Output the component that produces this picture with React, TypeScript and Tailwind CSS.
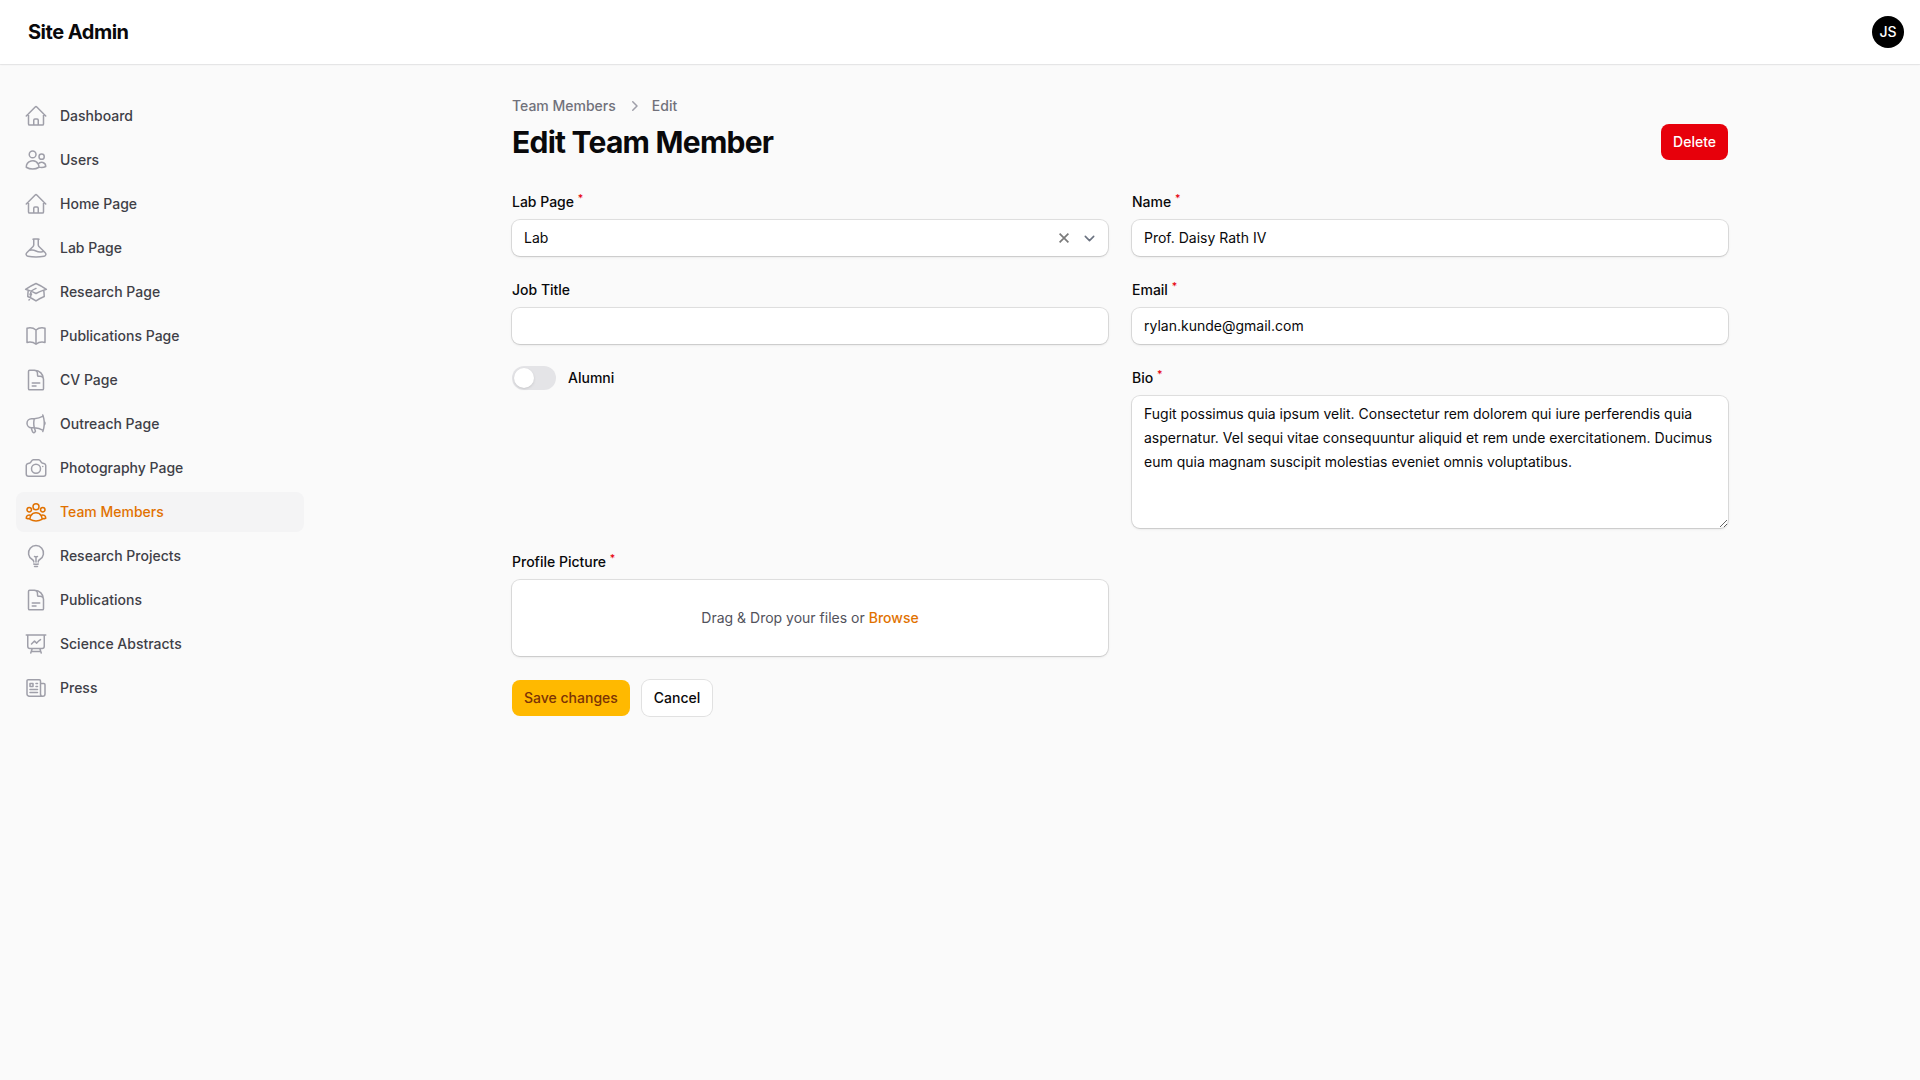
import type { ReactNode } from 'react';
import type { IconType } from 'react-icons';
import {
  HiMiniChevronRight,
  HiOutlineAcademicCap,
  HiOutlineBeaker,
  HiOutlineBookOpen,
  HiOutlineCamera,
  HiOutlineDocumentText,
  HiOutlineHome,
  HiOutlineLightBulb,
  HiOutlineMegaphone,
  HiOutlineNewspaper,
  HiOutlinePresentationChartLine,
  HiOutlineUserGroup,
  HiOutlineUsers,
} from 'react-icons/hi2';

const navItems: { label: string; icon: IconType; active?: boolean }[] = [
  { label: 'Dashboard', icon: HiOutlineHome },
  { label: 'Users', icon: HiOutlineUsers },
  { label: 'Home Page', icon: HiOutlineHome },
  { label: 'Lab Page', icon: HiOutlineBeaker },
  { label: 'Research Page', icon: HiOutlineAcademicCap },
  { label: 'Publications Page', icon: HiOutlineBookOpen },
  { label: 'CV Page', icon: HiOutlineDocumentText },
  { label: 'Outreach Page', icon: HiOutlineMegaphone },
  { label: 'Photography Page', icon: HiOutlineCamera },
  { label: 'Team Members', icon: HiOutlineUserGroup, active: true },
  { label: 'Research Projects', icon: HiOutlineLightBulb },
  { label: 'Publications', icon: HiOutlineDocumentText },
  { label: 'Science Abstracts', icon: HiOutlinePresentationChartLine },
  { label: 'Press', icon: HiOutlineNewspaper },
];

function Topbar() {
  return (
    <header className="flex h-16 items-center justify-between bg-white pr-4 pl-7 shadow-xs ring-1 ring-zinc-950/5">
      <div className="text-xl leading-5 font-bold tracking-tight">Site Admin</div>
      <div className="flex size-8 items-center justify-center rounded-full bg-black text-sm font-medium text-white">
        JS
      </div>
    </header>
  );
}

function Sidebar() {
  return (
    <nav className="flex w-80 shrink-0 flex-col gap-1 px-4 py-8">
      {navItems.map(({ label, icon: Icon, active }) => (
        <a
          key={label}
          className={
            active
              ? 'flex h-10 items-center gap-3 rounded-lg bg-zinc-100 px-2 text-amber-600'
              : 'flex h-10 items-center gap-3 rounded-lg px-2 text-zinc-700'
          }
        >
          <Icon className={active ? 'size-6' : 'size-6 text-zinc-400'} />
          <span className="text-sm font-medium">{label}</span>
        </a>
      ))}
    </nav>
  );
}

function Field({ label, required, children }: { label: string; required?: boolean; children: ReactNode }) {
  return (
    <div className="flex flex-col gap-2">
      <div className="h-5 text-sm leading-5 font-medium">
        {label}
        {required && (
          <>
            {' '}
            <sup className="font-medium text-red-600">*</sup>
          </>
        )}
      </div>
      <div className="rounded-lg bg-white text-sm shadow-sm ring-1 ring-zinc-950/10">{children}</div>
    </div>
  );
}

function TextInput({ value }: { value: string }) {
  return <div className="flex h-9 items-center px-3">{value}</div>;
}

export default function App() {
  return (
    <div className="flex min-h-screen flex-col bg-zinc-50 font-['Inter',sans-serif] text-zinc-950 antialiased">
      <Topbar />
      <div className="flex flex-1">
        <Sidebar />
        <main className="mx-auto flex w-full max-w-7xl flex-col gap-8 px-8 py-8">
          <div>
            <div className="mb-2 flex h-5 items-center gap-2 text-sm font-medium text-zinc-500">
              <span>Team Members</span>
              <HiMiniChevronRight className="size-5 text-zinc-400" />
              <span>Edit</span>
            </div>
            <div className="flex items-center justify-between">
              <h1 className="text-3xl font-bold tracking-tight">Edit Team Member</h1>
              <button className="h-9 rounded-lg bg-red-600 px-3 text-sm font-medium text-white">Delete</button>
            </div>
          </div>

          <form className="flex flex-col gap-6">
            <div className="grid grid-cols-2 gap-6">
              <Field label="Lab Page" required>
                <div className="flex h-9 items-center pr-2 pl-3">
                  <span className="flex-1">Lab</span>
                  <svg className="mr-2.5 size-[10px]" viewBox="0 0 10 10" fill="none" stroke="#7a7a7a" strokeWidth="1.7">
                    <path d="M.6.6l8.8 8.8M9.4.6L.6 9.4" />
                  </svg>
                  <svg
                    className="size-[21px]"
                    viewBox="0 0 20 20"
                    fill="none"
                    stroke="#6b7280"
                    strokeWidth="1.5"
                    strokeLinecap="round"
                    strokeLinejoin="round"
                  >
                    <path d="m6 8 4 4 4-4" />
                  </svg>
                </div>
              </Field>
              <Field label="Name" required>
                <TextInput value="Prof. Daisy Rath IV" />
              </Field>
              <Field label="Job Title">
                <TextInput value="" />
              </Field>
              <Field label="Email" required>
                <TextInput value="rylan.kunde@gmail.com" />
              </Field>
              <div className="flex h-5 items-center gap-3">
                <div className="flex h-6 w-11 items-center rounded-full bg-zinc-200 px-0.5">
                  <div className="size-5 rounded-full bg-white shadow-sm" />
                </div>
                <span className="text-sm font-medium">Alumni</span>
              </div>
              <Field label="Bio" required>
                <textarea
                  className="block h-[132px] w-full px-3 py-1.5 text-sm leading-6 outline-none"
                  defaultValue="Fugit possimus quia ipsum velit. Consectetur rem dolorem qui iure perferendis quia aspernatur. Vel sequi vitae consequuntur aliquid et rem unde exercitationem. Ducimus eum quia magnam suscipit molestias eveniet omnis voluptatibus."
                />
              </Field>
              <Field label="Profile Picture" required>
                <div className="flex h-[76px] items-center justify-center gap-1 text-zinc-600">
                  <span>Drag &amp; Drop your files or</span>
                  <span className="font-medium text-amber-600">Browse</span>
                </div>
              </Field>
            </div>
            <div className="flex gap-3">
              <button type="button" className="h-9 rounded-lg bg-amber-400 px-3 text-sm font-medium text-amber-900">
                Save changes
              </button>
              <button type="button" className="h-9 rounded-lg bg-white px-3 text-sm font-medium ring-1 ring-zinc-950/10">
                Cancel
              </button>
            </div>
          </form>
        </main>
      </div>
    </div>
  );
}
